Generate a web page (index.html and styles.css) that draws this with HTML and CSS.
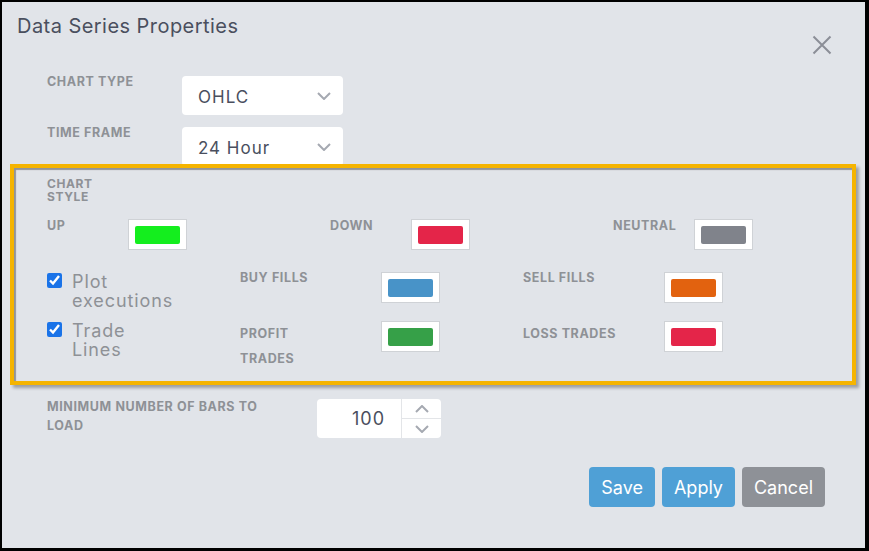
FILE: index.html
```html
<!DOCTYPE html>
<html lang="en">
<head>
<meta charset="utf-8">
<title>Data Series Properties</title>
<link rel="stylesheet" href="styles.css">
</head>
<body>
<div class="frame">
  <div class="head">
    <h1 class="title">Data Series Properties</h1>
    <button class="close" type="button" aria-label="Close">
      <svg viewBox="0 0 20 20" width="20" height="20"><path d="M1.5 1.5L18.5 18.5M18.5 1.5L1.5 18.5"/></svg>
    </button>
  </div>

  <div class="field">
    <span class="label">Chart Type</span>
    <div class="select"><span>OHLC</span><svg class="chev" viewBox="0 0 14 8" width="14" height="8"><path d="M1 1L7 7L13 1"/></svg></div>
  </div>
  <div class="field">
    <span class="label">Time Frame</span>
    <div class="select"><span>24 Hour</span><svg class="chev" viewBox="0 0 14 8" width="14" height="8"><path d="M1 1L7 7L13 1"/></svg></div>
  </div>

  <section class="style-box">
    <div class="label tight">Chart<br>Style</div>
    <div class="grid-colors">
      <div class="cell"><span class="label lab-w81">Up</span><span class="swatch"><i class="c-up"></i></span></div>
      <div class="cell"><span class="label lab-w81">Down</span><span class="swatch"><i class="c-down"></i></span></div>
      <div class="cell"><span class="label lab-w81">Neutral</span><span class="swatch"><i class="c-neutral"></i></span></div>
    </div>
    <div class="grid-exec">
      <label class="check"><input type="checkbox" checked><span>Plot<br>executions</span></label>
      <div class="cell"><span class="label lab-w141">Buy Fills</span><span class="swatch"><i class="c-buy"></i></span></div>
      <div class="cell"><span class="label lab-w141">Sell Fills</span><span class="swatch"><i class="c-sell"></i></span></div>
      <label class="check"><input type="checkbox" checked><span>Trade<br>Lines</span></label>
      <div class="cell"><span class="label lab-w141 tall">Profit<br>Trades</span><span class="swatch"><i class="c-profit"></i></span></div>
      <div class="cell"><span class="label lab-w141 tall">Loss Trades</span><span class="swatch"><i class="c-loss"></i></span></div>
    </div>
  </section>

  <div class="bars-row">
    <span class="label bars-label">Minimum number of bars to load</span>
    <div class="number">
      <span class="num-val">100</span>
      <div class="spin">
        <span class="spin-btn"><svg viewBox="0 0 14 8" width="14" height="8"><path d="M1 7L7 1L13 7"/></svg></span>
        <span class="spin-btn"><svg viewBox="0 0 14 8" width="14" height="8"><path d="M1 1L7 7L13 1"/></svg></span>
      </div>
    </div>
  </div>

  <div class="actions">
    <button class="btn btn-blue" type="button">Save</button>
    <button class="btn btn-blue" type="button">Apply</button>
    <button class="btn btn-gray" type="button">Cancel</button>
  </div>
</div>
</body>
</html>
```

FILE: styles.css
```css
* { box-sizing: border-box; }
html, body { margin: 0; padding: 0; background: #000; }
body { font-family: Inter, "Open Sans", "Liberation Sans", sans-serif; }

.frame {
  width: 869px;
  height: 551px;
  background: #e1e4e9;
  border-style: solid;
  border-color: #000;
  border-width: 2px 4px 3px 2px;
  overflow: hidden;
}

.head {
  display: flex;
  justify-content: space-between;
  align-items: flex-start;
  height: 71px;
}
.title {
  margin: 12px 0 0 15px;
  font-size: 20px;
  line-height: 24px;
  font-weight: 400;
  letter-spacing: 0.45px;
  color: #4a4f5e;
}
.close {
  margin: 33px 33px 0 0;
  padding: 0;
  width: 20px;
  height: 20px;
  border: 0;
  background: none;
  display: flex;
}
.close path { stroke: #8b8e97; stroke-width: 2; fill: none; }

.label {
  font-size: 12.5px;
  line-height: 14px;
  font-weight: 700;
  text-transform: uppercase;
  color: #8e9196;
  letter-spacing: 0.6px;
}

.field {
  display: grid;
  grid-template-columns: 135px 161px;
  margin: 0 0 9px 45px;
}
.field .label { margin-top: 2px; }
.select {
  margin-top: 3px;
  height: 39px;
  background: #fff;
  border-radius: 4px;
  display: flex;
  align-items: center;
  justify-content: space-between;
  padding: 2px 12px 0 16px;
  font-size: 17px;
  letter-spacing: 1px;
  color: #4a4f5e;
}
.select .chev { margin-top: -2px; }
.chev path, .spin-btn path { stroke: #a5a9b1; stroke-width: 2; fill: none; }

.style-box {
  margin: -11px 0 0 8px;
  width: 846px;
  height: 221px;
  border: 4px solid #f5b400;
  box-shadow: inset 2px 2px 1px rgba(0,0,0,0.35), 3px 3px 3px rgba(0,0,0,0.3);
  padding: 9px 0 0 33px;
  position: relative;
}
.tight { font-size: 12px; line-height: 13px; }

.grid-colors {
  display: grid;
  grid-template-columns: 283px 283px 283px;
  margin-top: 16px;
}
.cell { display: flex; align-items: flex-start; }
.lab-w81 { width: 81px; flex: none; }
.lab-w141 { width: 141px; flex: none; margin-top: -1px; }
.tall { line-height: 25px; margin-top: 0; }

.swatch {
  width: 59px;
  height: 31px;
  background: #fff;
  border: 1px solid #cfd2d6;
  padding: 6px;
  flex: none;
}
.swatch i { display: block; height: 18px; border-radius: 2px; }
.c-up { background: #14ee1e; }
.c-down { background: #e42549; }
.c-neutral { background: #80838b; }
.c-buy { background: #4893c8; }
.c-sell { background: #e2620f; }
.c-profit { background: #36a048; }
.c-loss { background: #e42549; }

.grid-exec {
  display: grid;
  grid-template-columns: 193px 283px 283px;
  grid-template-rows: 49px auto;
  margin-top: 22px;
}
.check {
  display: flex;
  align-items: flex-start;
  font-size: 18px;
  line-height: 19px;
  letter-spacing: 0.9px;
  color: #8e9196;
}
.check input {
  margin: 1px 10px 0 0;
  width: 15px;
  height: 15px;
  accent-color: #1a73e8;
  flex: none;
}

.bars-row {
  display: grid;
  grid-template-columns: 270px 124px;
  margin: 12px 0 0 45px;
}
.bars-label { line-height: 19px; max-width: 245px; }
.number {
  margin-top: 2px;
  height: 39px;
  background: #fff;
  border-radius: 4px;
  display: flex;
}
.num-val {
  width: 84px;
  text-align: right;
  padding-right: 16px;
  font-size: 18px;
  line-height: 39px;
  letter-spacing: 1px;
  color: #4a4f5e;
}
.spin {
  width: 40px;
  border-left: 1px solid #e3e5e8;
  display: flex;
  flex-direction: column;
}
.spin-btn {
  flex: 1;
  display: flex;
  align-items: center;
  justify-content: center;
}
.spin-btn + .spin-btn { border-top: 1px solid #e3e5e8; }

.actions {
  display: flex;
  justify-content: flex-end;
  gap: 7px;
  margin: 29px 40px 0 0;
}
.btn {
  height: 40px;
  border: 0;
  border-radius: 4px;
  padding: 0 12px;
  font-family: inherit;
  font-size: 18px;
  color: #fff;
}
.btn-blue { background: #4fa0d6; }
.btn-gray { background: #8e9197; }
```
